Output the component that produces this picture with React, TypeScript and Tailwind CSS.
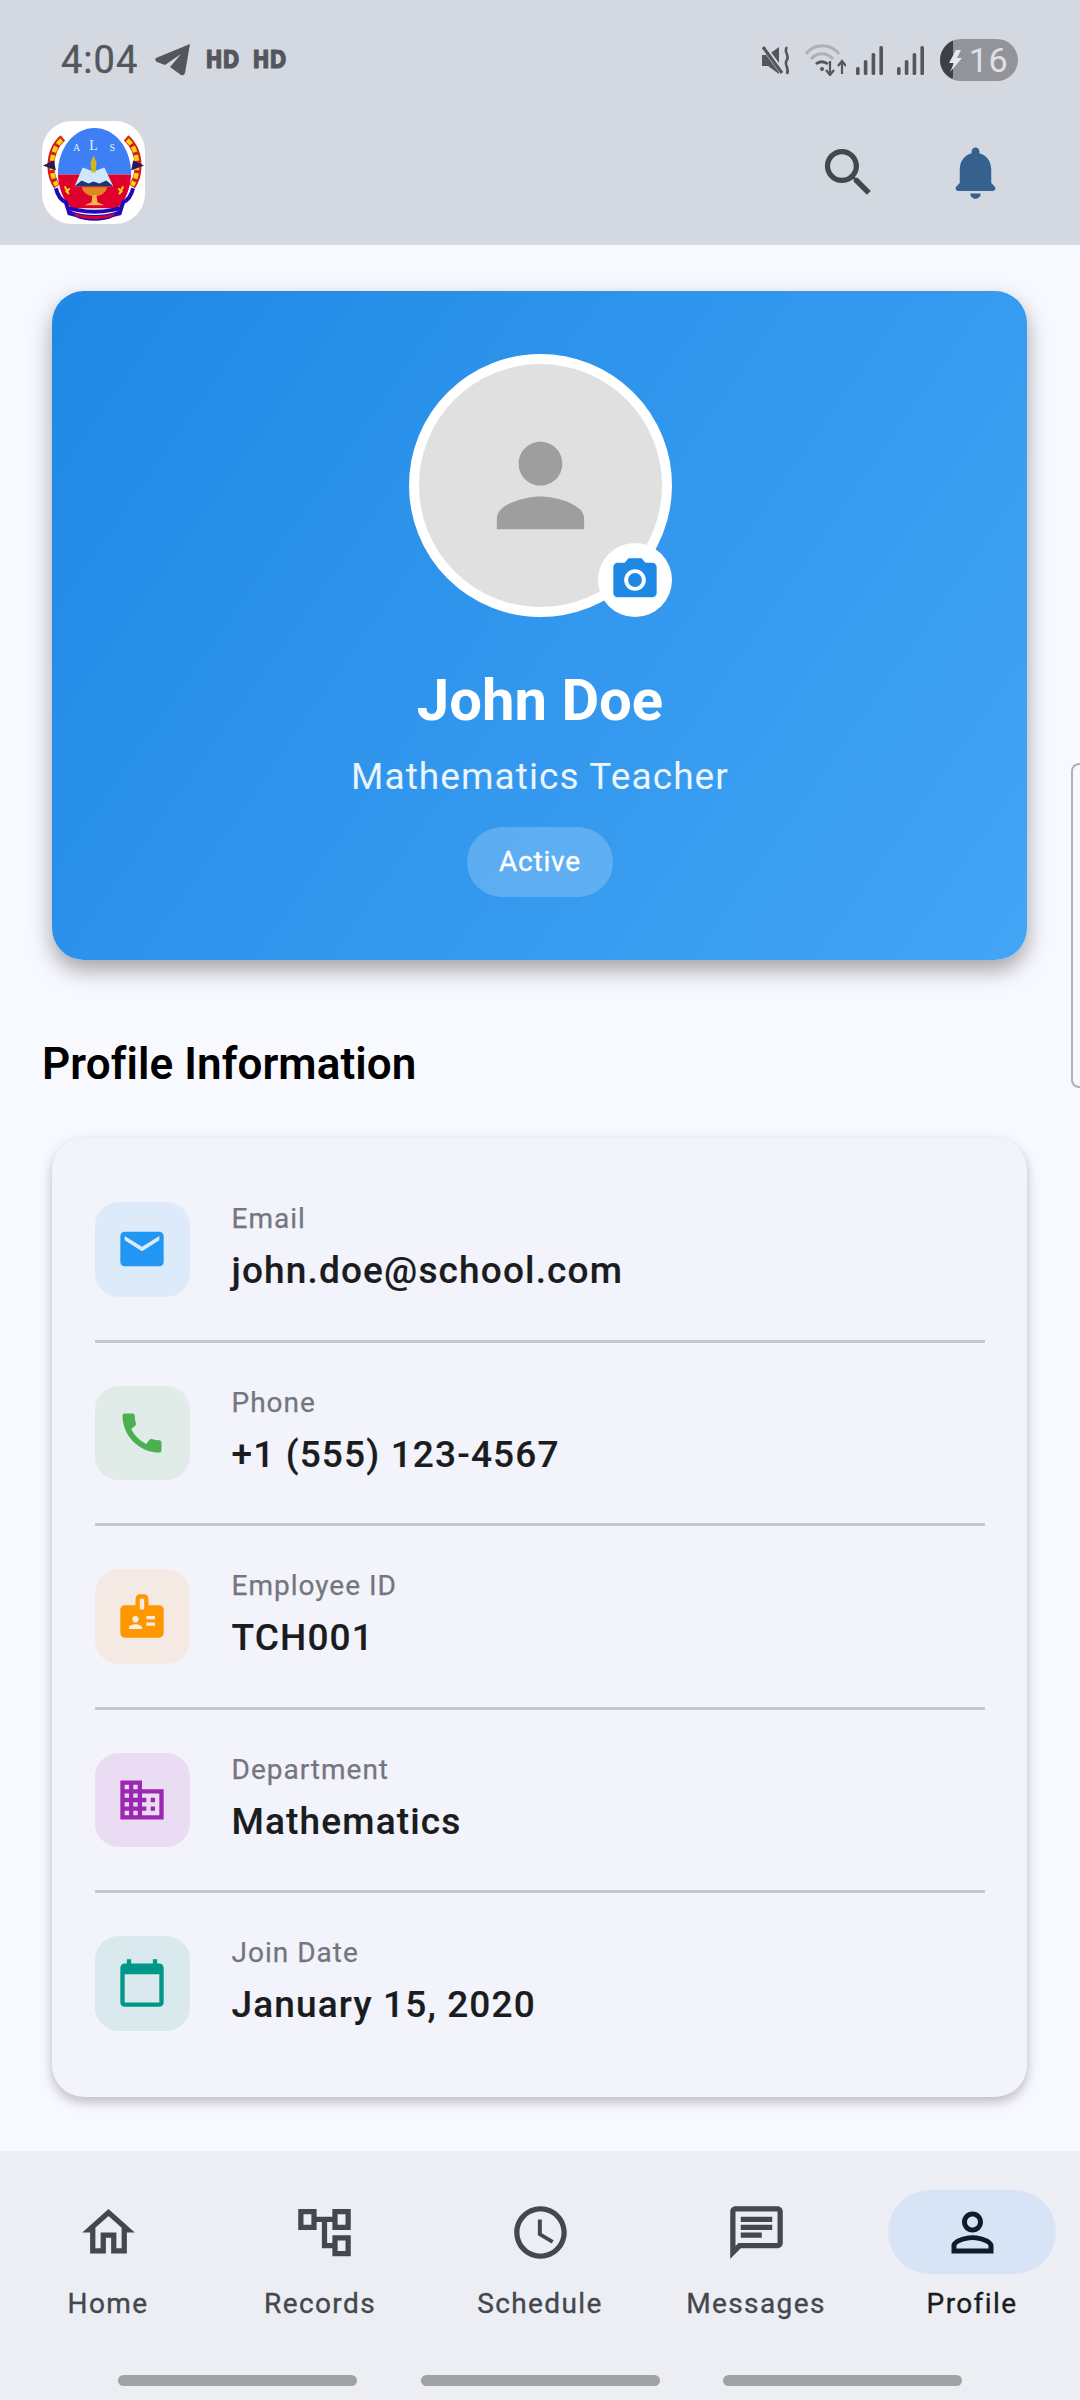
import { FC } from "react";

const ICONS = {
  email:
    "M20 4H4c-1.1 0-1.99.9-1.99 2L2 18c0 1.1.9 2 2 2h16c1.1 0 2-.9 2-2V6c0-1.1-.9-2-2-2zm0 4l-8 5-8-5V6l8 5 8-5v2z",
  phone:
    "M20.01 15.38c-1.23 0-2.42-.2-3.53-.56-.35-.12-.74-.03-1.01.24l-1.57 1.97c-2.83-1.35-5.48-3.9-6.89-6.83l1.95-1.66c.27-.28.35-.67.24-1.02-.37-1.11-.56-2.3-.56-3.53 0-.54-.45-.99-.99-.99H4.19C3.65 3 3 3.24 3 3.99 3 13.28 10.73 21 20.01 21c.71 0 .99-.63.99-1.18v-3.45c0-.54-.45-.99-.99-.99z",
  badge:
    "M20 7h-5V4c0-1.1-.9-2-2-2h-2c-1.1 0-2 .9-2 2v3H4c-1.1 0-2 .9-2 2v11c0 1.1.9 2 2 2h16c1.1 0 2-.9 2-2V9c0-1.1-.9-2-2-2zM9 12c.83 0 1.5.67 1.5 1.5S9.83 15 9 15s-1.5-.67-1.5-1.5S8.17 12 9 12zm3 6H6v-.75c0-1 2-1.5 3-1.5s3 .5 3 1.5V18zm1-9h-2V4h2v5zm5 7.5h-4V15h4v1.5zm0-3h-4V12h4v1.5z",
  business:
    "M12 7V3H2v18h20V7H12zM6 19H4v-2h2v2zm0-4H4v-2h2v2zm0-4H4V9h2v2zm0-4H4V5h2v2zm4 12H8v-2h2v2zm0-4H8v-2h2v2zm0-4H8V9h2v2zm0-4H8V5h2v2zm10 12h-8v-2h2v-2h-2v-2h2v-2h-2V9h8v10zm-2-8h-2v2h2v-2zm0 4h-2v2h2v-2z",
  calendar:
    "M20 3h-1V1h-2v2H7V1H5v2H4c-1.1 0-2 .9-2 2v16c0 1.1.9 2 2 2h16c1.1 0 2-.9 2-2V5c0-1.1-.9-2-2-2zm0 18H4V8h16v13z",
  camera:
    "M9 2L7.17 4H4c-1.1 0-2 .9-2 2v12c0 1.1.9 2 2 2h16c1.1 0 2-.9 2-2V6c0-1.1-.9-2-2-2h-3.17L15 2H9zm3 15c-2.76 0-5-2.24-5-5s2.24-5 5-5 5 2.24 5 5-2.24 5-5 5zm0-8.2a3.2 3.2 0 1 0 0 6.4 3.2 3.2 0 0 0 0-6.4z",
  person:
    "M12 12c2.21 0 4-1.79 4-4s-1.79-4-4-4-4 1.79-4 4 1.79 4 4 4zm0 2c-2.67 0-8 1.34-8 4v2h16v-2c0-2.66-5.33-4-8-4z",
  search:
    "M15.5 14h-.79l-.28-.27C15.41 12.59 16 11.11 16 9.5 16 5.91 13.09 3 9.5 3S3 5.91 3 9.5 5.91 16 9.5 16c1.61 0 3.09-.59 4.23-1.57l.27.28v.79l5 4.99L20.49 19l-4.99-5zm-6 0C7.01 14 5 11.99 5 9.5S7.01 5 9.5 5 14 7.01 14 9.5 11.99 14 9.5 14z",
  bell: "M12 22c1.1 0 2-.9 2-2h-4c0 1.1.9 2 2 2zm6-6v-5c0-3.07-1.63-5.64-4.5-6.32V4c0-.83-.67-1.5-1.5-1.5s-1.5.67-1.5 1.5v.68C7.64 5.36 6 7.92 6 11v5l-1.29 1.29c-.63.63-.19 1.71.7 1.71h13.17c.89 0 1.34-1.08.71-1.71L18 16z",
  home: "M12 5.69l5 4.5V18h-2v-6H9v6H7v-7.81l5-4.5M12 3L2 12h3v8h6v-6h2v6h6v-8h3L12 3z",
  tree: "M22 11V3h-7v3H9V3H2v8h7V8h2v10h4v3h7v-8h-7v3h-2V8h2v3h7zM7 9H4V5h3v4zm10 6h3v4h-3v-4zm0-10h3v4h-3V5z",
  clock:
    "M11.99 2C6.47 2 2 6.48 2 12s4.47 10 9.99 10C17.52 22 22 17.52 22 12S17.52 2 11.99 2zM12 20c-4.42 0-8-3.58-8-8s3.58-8 8-8 8 3.58 8 8-3.58 8-8 8zm.5-13H11v6l5.25 3.15.75-1.23-4.5-2.67z",
  message:
    "M20 2H4c-1.1 0-2 .9-2 2v18l4-4h14c1.1 0 2-.9 2-2V4c0-1.1-.9-2-2-2zm0 14H5.17L4 17.17V4h16v12zM6 12h8v2H6zm0-3h12v2H6zm0-3h12v2H6z",
  personOutline:
    "M12 5.9c1.16 0 2.1.94 2.1 2.1s-.94 2.1-2.1 2.1S9.9 9.16 9.9 8s.94-2.1 2.1-2.1m0 9c2.97 0 6.1 1.46 6.1 2.1v1.1H5.9V17c0-.64 3.13-2.1 6.1-2.1M12 4C9.79 4 8 5.79 8 8s1.79 4 4 4 4-1.79 4-4-1.79-4-4-4zm0 9c-2.67 0-8 1.34-8 4v3h16v-3c0-2.66-5.33-4-8-4z",
};

const Icon: FC<{ d: string; className: string }> = ({ d, className }) => (
  <svg viewBox="0 0 24 24" fill="currentColor" className={className}>
    <path d={d} fillRule="evenodd" />
  </svg>
);

// school emblem
const Logo = () => (
  <div className="w-[103px] h-[103px] rounded-[30px] bg-white overflow-hidden">
    <svg viewBox="0 0 104 104" className="w-full h-full">
      {/* dome and lower field */}
      <path d="M16 54 C16 26 33 7 53 7 C73 7 90 26 90 54 Z" fill="#3f7ff5" />
      <path d="M16 54 H90 C89 68 85 80 76 88 H30 C21 80 17 68 16 54 Z" fill="#e0002d" />
      {/* ribbon */}
      <path d="M14 68 C16 76 19 80 24 82 L26 88 L36 90 C46 92 60 92 70 90 L80 88 L82 82 C87 80 90 76 92 68" fill="none" stroke="#2208b8" strokeWidth="4" />
      <path d="M24 88 L32 92 C44 96 62 96 74 92 L82 88 L80 95 L72 97 C62 102 44 102 34 97 L26 95 Z" fill="#2208b8" />
      <path d="M32 93 C44 97 62 97 74 93 L72 96 C62 100 44 100 34 96 Z" fill="#e0002d" />
      {/* book, flame and bowl */}
      <path d="M33 66 L41 47 L52 51 L63 47 L72 66 Z" fill="#cfe8fb" />
      <path d="M33 66 L40 60 L47 63 L52 61 L58 63 L65 60 L72 66 Z" fill="#1d3570" />
      <path d="M52 35 L55 42 L54 52 H50 L49 42 Z" fill="#d7b51a" />
      <path d="M40 67 H66 C64 74 58 76 53 76 C48 76 42 74 40 67 Z" fill="#e08a1e" />
      <path d="M43 85 L50 82 L51 75 H55 L56 82 L63 85 Z" fill="#f2b84a" />
      {/* wreath */}
      <path d="M21 17 C13 24 9 34 9 46 C9 54 11 60 15 66" fill="none" stroke="#d81c1c" strokeWidth="7" />
      <path d="M85 17 C93 24 97 34 97 46 C97 54 95 60 91 66" fill="none" stroke="#d81c1c" strokeWidth="7" />
      <path d="M20 19 C13 25 10 34 10 46 C10 54 12 60 15 65" fill="none" stroke="#f5d90a" strokeWidth="4.5" strokeDasharray="6 3" />
      <path d="M86 19 C93 25 96 34 96 46 C96 54 94 60 91 65" fill="none" stroke="#f5d90a" strokeWidth="4.5" strokeDasharray="6 3" />
      <path d="M1 45 L12 40 L14 50 Z M103 45 L92 40 L90 50 Z" fill="#221a66" />
      <path d="M23 66 L27 74 M24 72 L28 68 M82 66 L78 74 M81 72 L77 68" stroke="#f5d90a" strokeWidth="2" />
      <text x="52" y="29" textAnchor="middle" fontSize="14" fill="#e6f0ff" fontFamily="Liberation Serif, serif">
        L
      </text>
      <text x="35" y="30" textAnchor="middle" fontSize="10" fill="#e6f0ff" fontFamily="Liberation Serif, serif">
        A
      </text>
      <text x="71" y="30" textAnchor="middle" fontSize="10" fill="#e6f0ff" fontFamily="Liberation Serif, serif">
        S
      </text>
    </svg>
  </div>
);

const StatusBar = () => (
  <div className="h-[120px] pl-[61px] pr-[62px] flex items-center justify-between text-[#55565b]">
    <div className="flex items-center">
      <span className="text-[38px] leading-none tracking-[1px] mr-[17px] [-webkit-text-stroke:0.4px_#55565b]">4:04</span>
      <svg viewBox="0 0 35 32" className="w-[35px] h-[32px] mr-[13px]" fill="currentColor">
        <path d="M35 0 L1 14 Q-1 16 2 18 L10 21 L26 10 L15 23 L26 31 Q29 32 30 29 Z" />
      </svg>
      <span className="text-[24px] leading-none font-black w-[34px] mr-[13px] [font-family:'DejaVu_Sans',sans-serif] scale-x-85 [-webkit-text-stroke:1px_#55565b]">HD</span>
      <span className="text-[24px] leading-none font-black w-[34px] [font-family:'DejaVu_Sans',sans-serif] scale-x-85 [-webkit-text-stroke:1px_#55565b]">HD</span>
    </div>
    <div className="flex items-center">
      <svg viewBox="0 0 29 29" className="w-[29px] h-[29px] mr-[14px]">
        <path d="M0 9 H6 L17 1 V28 L6 20 H0 Z" fill="currentColor" />
        <path d="M1 0 L21 27" stroke="#d4d8e1" strokeWidth="5.5" />
        <path d="M1 1 L20 27" stroke="currentColor" strokeWidth="3" />
        <path d="M25 1 C21 6 28 9 25 14 C21 18 28 22 25 28" fill="none" stroke="currentColor" strokeWidth="2.6" />
      </svg>
      <svg viewBox="0 0 41 32" className="w-[41px] h-[32px] mr-[10px]">
        <path d="M1 10 C9 -1 26 -1 34 10" fill="none" stroke="#aeb0b6" strokeWidth="3" />
        <path d="M6 15 C12 8 22 8 28 15" fill="none" stroke="#aeb0b6" strokeWidth="3" />
        <path d="M11 20 C14 17 19 17 23 20" fill="none" stroke="currentColor" strokeWidth="2.8" />
        <circle cx="17" cy="25" r="2" fill="currentColor" />
        <path d="M25 17 V30 M21 26 L25 31 L29 26 M37 30 V18 M33 22 L37 17 L41 22" fill="none" stroke="currentColor" strokeWidth="2.2" />
      </svg>
      <svg viewBox="0 0 27 29" className="w-[27px] h-[29px] mr-[14px]" fill="currentColor">
        <rect x="0" y="21" width="3.6" height="8" rx="1.5" />
        <rect x="7.8" y="14" width="3.6" height="15" rx="1.5" />
        <rect x="15.6" y="7" width="3.6" height="22" rx="1.5" />
        <rect x="23.4" y="0" width="3.6" height="29" rx="1.5" />
      </svg>
      <svg viewBox="0 0 27 29" className="w-[27px] h-[29px] mr-[16px]" fill="currentColor">
        <rect x="0" y="21" width="3.6" height="8" rx="1.5" />
        <rect x="7.8" y="14" width="3.6" height="15" rx="1.5" />
        <rect x="15.6" y="7" width="3.6" height="22" rx="1.5" />
        <rect x="23.4" y="0" width="3.6" height="29" rx="1.5" />
      </svg>
      <div className="relative w-[78px] h-[42px] rounded-full bg-[#939499] overflow-hidden flex items-center justify-end pr-[10px]">
        <svg viewBox="0 0 26 42" className="absolute left-0 top-0 w-[26px] h-[42px]">
          <path d="M0 0 H13 V38 L11 42 H0 Z" fill="#3f4045" />
          <path d="M16 11 L9 24 H14 L10 33 L22 19 H17 L21 11 Z" fill="#e6e8ee" />
        </svg>
        <span className="text-[34px] leading-none text-[#dfe1e7] tracking-[0.5px]">16</span>
      </div>
    </div>
  </div>
);

const AppBar = () => (
  <div className="h-[125px] pb-[21px] pl-[42px] pr-[73px] flex items-center justify-between">
    <Logo />
    <div className="flex items-center gap-[64px]">
      <Icon d={ICONS.search} className="w-[63px] h-[63px] text-[#43474e]" />
      <Icon d={ICONS.bell} className="w-[63px] h-[63px] text-[#36618e]" />
    </div>
  </div>
);

const HeroCard = () => (
  <div className="ml-[10px] mr-[11px] h-[669px] rounded-[32px] bg-linear-125 from-[#1e88e5] to-[#42a5f5] shadow-[0_10px_22px_rgba(0,0,0,0.35)] pt-[63px] pl-[1px] flex flex-col items-center text-white">
    <div className="relative w-[263px] h-[263px] rounded-full border-[10px] border-white bg-[#e0e0e0] flex items-center justify-center">
      <Icon d={ICONS.person} className="w-[131px] h-[131px] text-[#9e9e9e]" />
      <div className="absolute -right-[10px] -bottom-[10px] w-[74px] h-[74px] rounded-full bg-white flex items-center justify-center">
        <Icon d={ICONS.camera} className="w-[52px] h-[52px] text-[#1e88e5]" />
      </div>
    </div>
    <div className="mt-[51px] text-[58px] leading-[64px] font-bold">John Doe</div>
    <div className="mt-[24px] text-[37px] leading-[42px] tracking-[1.1px] text-white/90">Mathematics Teacher</div>
    <div className="mt-[29px] w-[146px] h-[70px] rounded-[35px] bg-white/20 flex items-center justify-center text-[28px] tracking-[0.8px] [-webkit-text-stroke:0.35px_#ffffff]">
      Active
    </div>
  </div>
);

const rows = [
  { icon: ICONS.email, color: "text-[#2196f3]", tile: "bg-[#dceaf9]", label: "Email", value: "john.doe@school.com" },
  { icon: ICONS.phone, color: "text-[#4caf50]", tile: "bg-[#e1ebe8]", label: "Phone", value: "+1 (555) 123-4567" },
  { icon: ICONS.badge, color: "text-[#ff9800]", tile: "bg-[#f5eae3]", label: "Employee ID", value: "TCH001" },
  { icon: ICONS.business, color: "text-[#9c27b0]", tile: "bg-[#eadcf2]", label: "Department", value: "Mathematics" },
  { icon: ICONS.calendar, color: "text-[#009688]", tile: "bg-[#d9e9ed]", label: "Join Date", value: "January 15, 2020" },
];

const InfoCard = () => (
  <div className="ml-[10px] mr-[11px] mt-[49px] rounded-[32px] bg-[#f2f3fb] shadow-[0_5px_12px_rgba(0,0,0,0.25)] pl-[43px] pr-[42px] pt-[64px] pb-[66px]">
    {rows.map((row, index) => (
      <div key={row.label}>
        <div className="flex items-center gap-[42px]">
          <div className={`w-[94.5px] h-[94.5px] rounded-[24px] flex items-center justify-center ${row.tile}`}>
            <Icon d={row.icon} className={`w-[52px] h-[52px] ${row.color}`} />
          </div>
          <div className="pb-[3px]">
            <div className="text-[28px] leading-[34px] tracking-[1px] text-[#74767c] [-webkit-text-stroke:0.25px_#74767c]">{row.label}</div>
            <div className="mt-[13px] text-[37px] leading-[44px] tracking-[1.15px] font-medium text-[#1a1c1e] [-webkit-text-stroke:0.15px_#1a1c1e]">{row.value}</div>
          </div>
        </div>
        {index < rows.length - 1 && <div className="h-[3px] mt-[43px] mb-[43px] bg-[#c4c6d0]"></div>}
      </div>
    ))}
  </div>
);

const tabs = [
  { icon: ICONS.home, label: "Home", shift: "" },
  { icon: ICONS.tree, label: "Records", shift: "-translate-x-[4px]" },
  { icon: ICONS.clock, label: "Schedule", shift: "" },
  { icon: ICONS.message, label: "Messages", shift: "" },
  { icon: ICONS.personOutline, label: "Profile", shift: "", active: true },
];

const BottomNav = () => (
  <div className="h-[249px] bg-[#edeef3]">
    <div className="grid grid-cols-5 pt-[39px]">
      {tabs.map((tab) => (
        <div key={tab.label} className="flex flex-col items-center">
          <div className={`w-[168px] h-[84px] rounded-[42px] flex items-center justify-center ${tab.active ? "bg-[#d7e4f6]" : ""}`}>
            <Icon d={tab.icon} className={`w-[63px] h-[63px] ${tab.active ? "text-[#0f1c2b]" : "text-[#43474e]"}`} />
          </div>
          <div className={`mt-[12px] text-[28px] leading-[36px] tracking-[1.4px] [-webkit-text-stroke:0.35px] ${tab.shift} ${tab.active ? "text-[#1a1c1e]" : "text-[#43474e]"}`}>
            {tab.label}
          </div>
        </div>
      ))}
    </div>
    <div className="mt-[53px] pl-[118px] pr-[118px] flex justify-between">
      <div className="w-[239px] h-[11px] rounded-full bg-[#a1a2a6]"></div>
      <div className="w-[239px] h-[11px] rounded-full bg-[#a1a2a6]"></div>
      <div className="w-[239px] h-[11px] rounded-full bg-[#a1a2a6]"></div>
    </div>
  </div>
);

const App = () => {
  return (
    <div className="relative w-[1080px] h-[2400px] overflow-hidden flex flex-col bg-[#f8f9ff] [font-family:Roboto,sans-serif]">
      <div className="h-[245px] bg-[#d4d8e1]">
        <StatusBar />
        <AppBar />
      </div>
      <div className="flex-1 px-[42px] pt-[46px]">
        <HeroCard />
        <div className="mt-[79px] text-[44px] leading-[50px] tracking-[0.1px] font-semibold text-black">Profile Information</div>
        <InfoCard />
      </div>
      <BottomNav />
      {/* edge handle over the page */}
      <div className="absolute right-0 top-[763px] w-[9px] h-[325px] rounded-l-[8px] border-2 border-r-0 border-[#b0b1b5]"></div>
    </div>
  );
};

export default App;
